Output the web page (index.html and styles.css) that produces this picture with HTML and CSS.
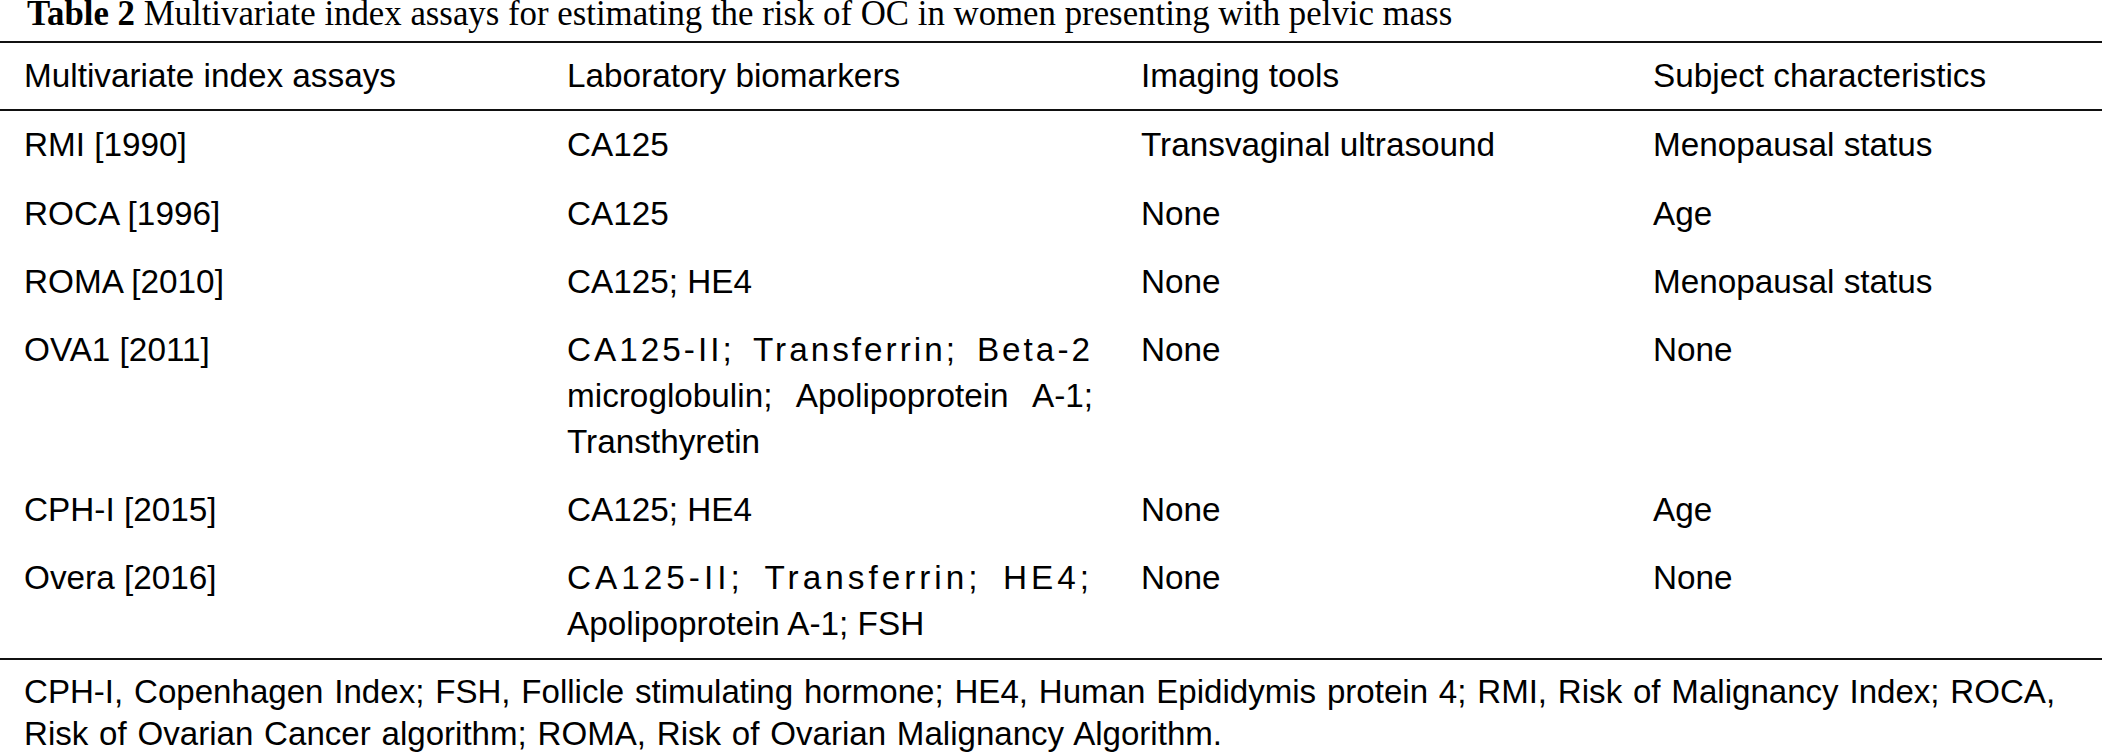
FILE: index.html
```html
<!DOCTYPE html>
<html lang="en">
<head>
<meta charset="utf-8">
<title>Table 2</title>
<link rel="stylesheet" href="styles.css">
</head>
<body>
<div class="page">
  <div class="caption"><b>Table 2</b> Multivariate index assays for estimating the risk of OC in women presenting with pelvic mass</div>
  <table class="data">
    <colgroup>
      <col class="c1"><col class="c2"><col class="c3"><col class="c4">
    </colgroup>
    <thead>
      <tr>
        <th>Multivariate index assays</th>
        <th>Laboratory biomarkers</th>
        <th>Imaging tools</th>
        <th>Subject characteristics</th>
      </tr>
    </thead>
    <tbody>
      <tr><td>RMI [1990]</td><td>CA125</td><td>Transvaginal ultrasound</td><td>Menopausal status</td></tr>
      <tr><td>ROCA [1996]</td><td>CA125</td><td>None</td><td>Age</td></tr>
      <tr><td>ROMA [2010]</td><td>CA125; HE4</td><td>None</td><td>Menopausal status</td></tr>
      <tr><td>OVA1 [2011]</td><td class="just"><span class="spread-a">CA125-II; Transferrin; Beta-2</span> microglobulin; Apolipoprotein A-1; Transthyretin</td><td>None</td><td>None</td></tr>
      <tr><td>CPH-I [2015]</td><td>CA125; HE4</td><td>None</td><td>Age</td></tr>
      <tr><td>Overa [2016]</td><td class="just"><span class="spread-b">CA125-II; Transferrin; HE4;</span> Apolipoprotein A-1; FSH</td><td>None</td><td>None</td></tr>
    </tbody>
  </table>
  <p class="footnote">CPH-I, Copenhagen Index; FSH, Follicle stimulating hormone; HE4, Human Epididymis protein 4; RMI, Risk of Malignancy Index; ROCA, Risk of Ovarian Cancer algorithm; ROMA, Risk of Ovarian Malignancy Algorithm.</p>
</div>
</body>
</html>
```

FILE: styles.css
```css
html, body {
  margin: 0;
  padding: 0;
  background: #ffffff;
}

.page {
  width: 2102px;
  color: #000;
}

.caption {
  font-family: "Liberation Serif", "Times New Roman", serif;
  font-size: 34.8px;
  line-height: 28px;
  padding-left: 27px;
  margin-bottom: 13px;
  white-space: nowrap;
}

.caption b {
  font-weight: bold;
}

.data {
  width: 2102px;
  border-collapse: collapse;
  table-layout: fixed;
  font-family: "Liberation Sans", Arial, Helvetica, sans-serif;
  font-size: 33.3px;
  line-height: 45.6px;
  border-top: 2px solid #111;
  border-bottom: 2px solid #111;
}

.c1 { width: 543px; }
.c2 { width: 574px; }
.c3 { width: 512px; }
.c4 { width: 473px; }

.data th {
  font-weight: normal;
  text-align: left;
  padding: 10.2px 24px 10.2px 24px;
  border-bottom: 2px solid #111;
  vertical-align: top;
}

.data td {
  text-align: left;
  padding: 11.4px 24px 11.4px 24px;
  vertical-align: top;
}

.data td.just {
  text-align: justify;
}

.spread-a {
  letter-spacing: 3px;
}

.spread-b {
  letter-spacing: 4px;
}

.footnote {
  margin: 0;
  padding: 11px 24px 0 24px;
  font-family: "Liberation Sans", Arial, Helvetica, sans-serif;
  font-size: 33.1px;
  line-height: 41.6px;
  word-spacing: 1.6px;
}
```
